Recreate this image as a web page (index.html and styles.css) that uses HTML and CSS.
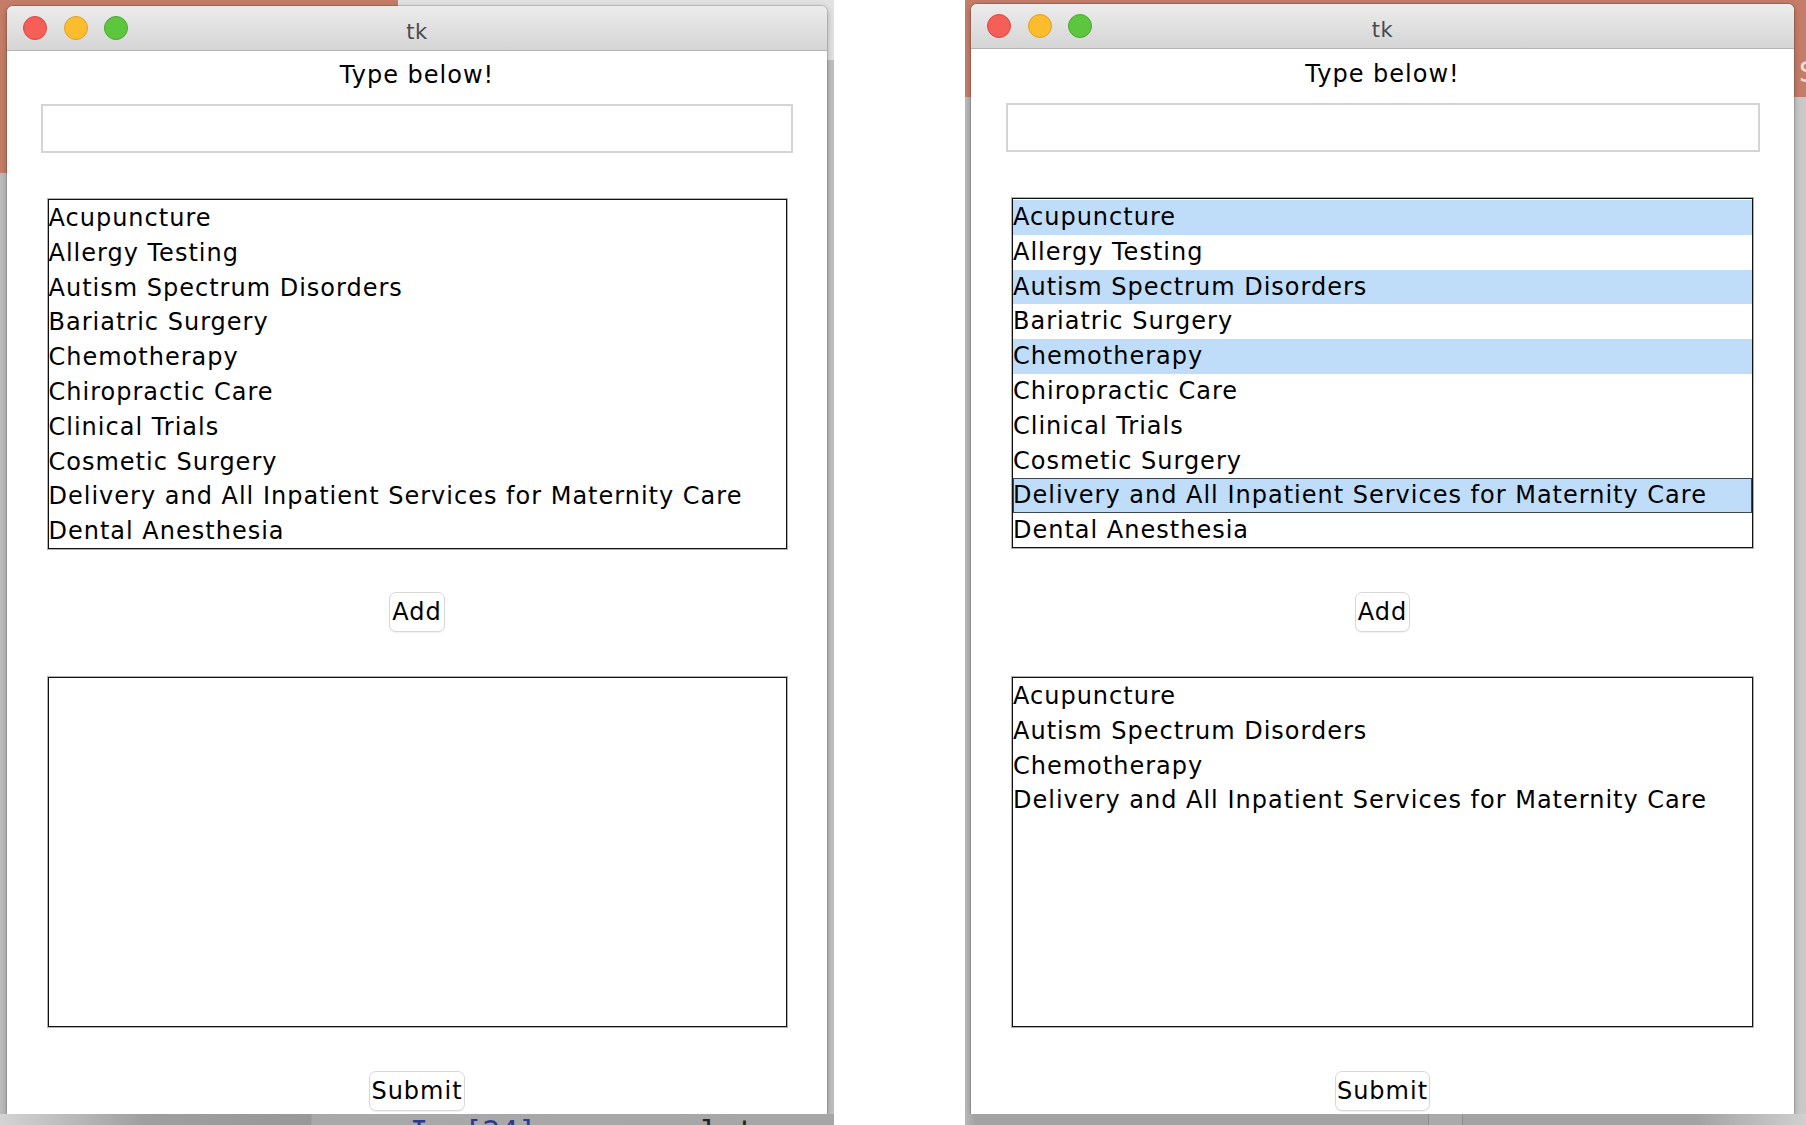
FILE: index.html
```html
<!DOCTYPE html>
<html lang="en">
<head>
<meta charset="utf-8">
<title>tk</title>
<link rel="stylesheet" href="styles.css">
</head>
<body>
<div class="screen">
  <div class="shot shot-left">
    <div class="window win-left">
      <div class="titlebar">
        <div class="lights">
          <span class="light red"></span>
          <span class="light yellow"></span>
          <span class="light green"></span>
        </div>
        <div class="title">tk</div>
        <div></div>
      </div>
      <div class="content content-left">
        <div class="label">Type below!</div>
        <div class="entry"></div>
        <ul class="listbox">
          <li>Acupuncture</li>
          <li>Allergy Testing</li>
          <li>Autism Spectrum Disorders</li>
          <li>Bariatric Surgery</li>
          <li>Chemotherapy</li>
          <li>Chiropractic Care</li>
          <li>Clinical Trials</li>
          <li>Cosmetic Surgery</li>
          <li>Delivery and All Inpatient Services for Maternity Care</li>
          <li>Dental Anesthesia</li>
        </ul>
        <button class="btn btn-add">Add</button>
        <ul class="listbox listbox-out"></ul>
        <button class="btn btn-submit">Submit</button>
      </div>
    </div>
    <div class="foot foot-left">
      <span class="code-in">In [24]:</span>
      <span class="code-txt">sel tea</span>
    </div>
  </div>

  <div class="shot shot-right">
    <span class="bg-letter">S</span>
    <div class="window win-right">
      <div class="titlebar">
        <div class="lights">
          <span class="light red"></span>
          <span class="light yellow"></span>
          <span class="light green"></span>
        </div>
        <div class="title">tk</div>
        <div></div>
      </div>
      <div class="content content-right">
        <div class="label">Type below!</div>
        <div class="entry"></div>
        <ul class="listbox">
          <li class="sel">Acupuncture</li>
          <li>Allergy Testing</li>
          <li class="sel">Autism Spectrum Disorders</li>
          <li>Bariatric Surgery</li>
          <li class="sel">Chemotherapy</li>
          <li>Chiropractic Care</li>
          <li>Clinical Trials</li>
          <li>Cosmetic Surgery</li>
          <li class="sel active">Delivery and All Inpatient Services for Maternity Care</li>
          <li>Dental Anesthesia</li>
        </ul>
        <button class="btn btn-add">Add</button>
        <ul class="listbox listbox-out">
          <li>Acupuncture</li>
          <li>Autism Spectrum Disorders</li>
          <li>Chemotherapy</li>
          <li>Delivery and All Inpatient Services for Maternity Care</li>
        </ul>
        <button class="btn btn-submit">Submit</button>
      </div>
    </div>
    <div class="foot foot-right">
      <span class="foot-box"></span>
    </div>
  </div>
</div>
</body>
</html>
```

FILE: styles.css
```css
* { box-sizing: border-box; }

html, body {
  margin: 0;
  padding: 0;
}

body {
  width: 1806px;
  height: 1125px;
  overflow: hidden;
  background: #ffffff;
  font-family: "DejaVu Sans", "Liberation Sans", sans-serif;
  color: #000;
}

.screen {
  display: flex;
  gap: 131px;
  height: 1125px;
}

.shot {
  position: relative;
  height: 1125px;
  display: flex;
  flex-direction: column;
  overflow: hidden;
}

.shot-left {
  width: 834px;
  background:
    linear-gradient(#c67d68, #c67d68) 0 0 / 398px 173px no-repeat,
    linear-gradient(#e2e2e2, #e2e2e2) 0 0 / 100% 60px no-repeat,
    linear-gradient(#c0c0c0, #c0c0c0) 827px 60px / 7px 100% no-repeat,
    #bdbdbd;
}

.shot-right {
  width: 841px;
  background:
    linear-gradient(#c67d68, #c67d68) 0 0 / 100% 97px no-repeat,
    linear-gradient(90deg, #b9b9b9 0, #b9b9b9 6px, #c9c9c9 6px) 0 0 / 100% 100% no-repeat;
}

.bg-letter {
  position: absolute;
  left: 834px;
  top: 56px;
  font-size: 28px;
  color: #f1ddd6;
}

/* window */
.window {
  background: #ffffff;
  border-radius: 6px 6px 0 0;
  box-shadow: 0 0 0 1px rgba(0, 0, 0, 0.12), 0 2px 7px rgba(0, 0, 0, 0.28);
  display: flex;
  flex-direction: column;
  overflow: hidden;
  flex: none;
}

.win-left {
  width: 820px;
  height: 1108px;
  margin: 6px 0 0 7px;
}

.win-right {
  width: 823px;
  height: 1110px;
  margin: 4px 0 0 6px;
}

.titlebar {
  height: 45px;
  flex: none;
  display: grid;
  grid-template-columns: 1fr auto 1fr;
  align-items: start;
  background: linear-gradient(#ececec, #d5d5d5);
  border-bottom: 1px solid #b4b4b4;
  overflow: hidden;
}

.lights {
  display: flex;
  gap: 16.5px;
  padding: 10px 0 0 16px;
}

.light {
  width: 24px;
  height: 24px;
  border-radius: 50%;
  display: block;
}
.red { background: #f65e58; border: 1px solid #e0443e; }
.yellow { background: #fbbd2e; border: 1px solid #dfa023; }
.green { background: #5dc63f; border: 1px solid #45aa2c; }

.title {
  font-size: 21px;
  letter-spacing: 0.5px;
  color: #4a4a4a;
  line-height: 44px;
  padding-top: 4px;
}

.content {
  display: flex;
  flex-direction: column;
  align-items: center;
  font-size: 24px;
  letter-spacing: 1px;
}

.content-right { padding-top: 1px; }

.label {
  margin-top: 10px;
  line-height: 28px;
  height: 28px;
}

.entry {
  margin-top: 15px;
  width: 752px;
  height: 49px;
  border: 2px solid #d4d4d4;
  background: #fff;
}

.content-right .entry { width: 754px; }

.listbox {
  list-style: none;
  margin: 46px 0 0 0;
  padding: 1px 0 0 0;
  width: 739px;
  height: 350px;
  border: 1px solid #111;
  box-shadow: 0 0 0 1px rgba(0, 0, 0, 0.3);
  background: #fff;
  overflow: hidden;
}

.content-right .listbox { width: 741px; }

.listbox li {
  height: 34.8px;
  line-height: 34.8px;
  padding-left: 0;
  white-space: nowrap;
}

.listbox li.sel {
  background: #bfdcf8;
}

.listbox li.active {
  box-shadow: inset 0 0 0 1px #3c4650;
}

.listbox-out {
  margin-top: 45px;
}

.btn {
  font-family: inherit;
  font-size: 24px;
  letter-spacing: 1px;
  color: #000;
  background: #ffffff;
  border: 1px solid #d8d8d8;
  border-radius: 7px;
  height: 40px;
  line-height: 38px;
  padding: 0 2px;
  box-shadow: 0 1px 1px rgba(0, 0, 0, 0.06);
}

.btn-add {
  margin-top: 43px;
}

.content-right .btn-add {
  margin-top: 44px;
}

.btn-submit {
  margin-top: 44px;
  padding: 0 1px;
}

/* strips under the windows */
.foot {
  height: 11px;
  flex: none;
  overflow: hidden;
  display: flex;
  align-items: flex-start;
}

.foot-left {
  background: linear-gradient(90deg, #d4d4d4 0, #9f9f9f 144px, #989898 311px, #a9a9a9 312px, #a6a6a6 100%);
  font-family: "DejaVu Sans Mono", monospace;
  font-size: 30px;
  line-height: 30px;
}

.code-in {
  margin-left: 410px;
  margin-top: 3px;
  color: #2b3a8c;
}

.code-txt {
  margin-left: 110px;
  margin-top: 3px;
  color: #222;
}

.foot-right {
  background: linear-gradient(90deg, #b8b8b8 0, #a3a3a3 10px, #a3a3a3 732px, #d0d0d0 100%);
}

.foot-box {
  margin-left: 463px;
  width: 35px;
  height: 11px;
  border-left: 1px solid #8c8c8c;
  border-right: 1px solid #8c8c8c;
  background: #aaaaaa;
}
```
